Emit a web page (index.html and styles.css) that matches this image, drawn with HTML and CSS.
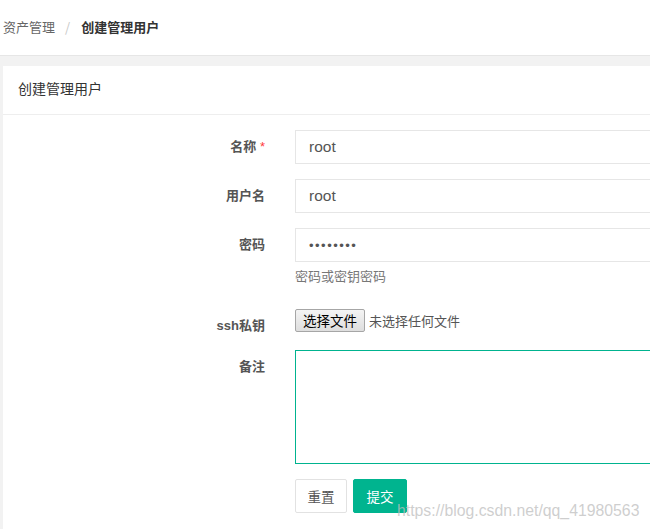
FILE: index.html
```html
<!DOCTYPE html>
<html lang="zh">
<head>
<meta charset="utf-8">
<title>创建管理用户</title>
<link rel="stylesheet" href="styles.css">
</head>
<body>
<div class="crumb">
  <span class="crumb-link">资产管理</span><span class="crumb-sep">/</span><span class="crumb-cur">创建管理用户</span>
</div>
<div class="main">
  <div class="card">
    <div class="card-header">创建管理用户</div>
    <form class="form">
      <div class="row">
        <label class="label">名称 <span class="req">*</span></label>
        <div class="field"><input class="input" type="text" value="root"></div>
      </div>
      <div class="row">
        <label class="label">用户名</label>
        <div class="field"><input class="input" type="text" value="root"></div>
      </div>
      <div class="row row-pass">
        <label class="label">密码</label>
        <div class="field">
          <input class="input" type="password" value="12345678">
          <div class="hint">密码或密钥密码</div>
        </div>
      </div>
      <div class="row row-file">
        <label class="label">ssh私钥</label>
        <div class="field file">
          <span class="file-btn">选择文件</span><span class="file-none">未选择任何文件</span>
        </div>
      </div>
      <div class="row">
        <label class="label">备注</label>
        <div class="field"><textarea class="textarea"></textarea></div>
      </div>
      <div class="row row-btns">
        <div class="label"></div>
        <div class="field btns">
          <button type="button" class="btn btn-plain">重置</button>
          <button type="button" class="btn btn-primary">提交</button>
        </div>
      </div>
    </form>
  </div>
</div>
<div class="watermark">https://blog.csdn.net/qq_41980563</div>
</body>
</html>
```
FILE: styles.css
```css
html, body {
  margin: 0;
  padding: 0;
  overflow: hidden;
  background: #fff;
  font-family: "Liberation Sans", "Noto Sans CJK SC", sans-serif;
  color: #333;
}
.crumb {
  height: 55px;
  line-height: 53px;
  padding-left: 3px;
  border-bottom: 1px solid #e6e6e6;
  font-size: 13px;
  font-family: "Noto Sans CJK SC", sans-serif;
}
.crumb-link { color: #666; }
.crumb-sep { color: #c8c8c8; margin: 0 11px 0 10px; }
.crumb-cur { color: #333; font-weight: bold; }
.main {
  background: #f2f2f2;
  padding: 10px 0 0 3px;
  height: 600px;
}
.card {
  background: #fff;
  width: 900px;
  height: 600px;
}
.card-header {
  height: 48px;
  line-height: 45px;
  padding-left: 15px;
  border-bottom: 1px solid #eeeeee;
  font-size: 14px;
  color: #333;
  font-family: "Noto Sans CJK SC", sans-serif;
}
.form {
  padding-top: 15px;
}
.row {
  display: grid;
  grid-template-columns: 262px 500px;
  column-gap: 30px;
  margin-bottom: 15px;
}
.label {
  text-align: right;
  font-size: 13px;
  font-weight: bold;
  color: #555;
  line-height: 20px;
  padding: 7px 0;
  font-family: "Liberation Sans", "Noto Sans CJK SC", sans-serif;
}
.req { color: #ff3b3b; font-weight: normal; }
.input {
  display: block;
  box-sizing: border-box;
  width: 100%;
  height: 34px;
  border: 1px solid #e6e6e6;
  padding: 0 13px;
  font-size: 15.5px;
  color: #555;
  font-family: "Liberation Sans", sans-serif;
  outline: none;
}
.input[type="password"] { font-size: 13px; letter-spacing: 1.5px; }
.hint {
  margin-top: 4px;
  font-size: 13px;
  line-height: 20px;
  color: #777;
  font-family: "Noto Sans CJK SC", sans-serif;
}
.row-pass { margin-bottom: 22px; }
.row-file { margin-bottom: 14px; }
.row-file .label { padding: 8px 0 0; }
.file {
  display: flex;
  align-items: flex-start;
  padding-top: 1px;
}
.file-btn {
  box-sizing: border-box;
  height: 23px;
  line-height: 20px;
  padding: 0 7px;
  border: 1px solid #a6a6a6;
  border-radius: 2px;
  background: linear-gradient(#f4f4f4, #dedede);
  color: #000;
  font-size: 13.5px;
  font-family: "Noto Sans CJK SC", sans-serif;
}
.file-none {
  margin-left: 4px;
  line-height: 23px;
  font-size: 13px;
  color: #555;
  font-family: "Noto Sans CJK SC", sans-serif;
}
.textarea {
  display: block;
  box-sizing: border-box;
  width: 100%;
  height: 114px;
  border: 1px solid #00b38f;
  resize: none;
  outline: none;
  margin: 0;
}
.btns {
  display: flex;
  gap: 6px;
}
.btn {
  box-sizing: border-box;
  height: 34px;
  padding: 0;
  font-size: 13.5px;
  font-family: "Noto Sans CJK SC", sans-serif;
  border-radius: 2px;
  cursor: pointer;
}
.btn-plain {
  width: 52px;
  background: #fff;
  border: 1px solid #e2e2e2;
  color: #555;
}
.btn-primary {
  width: 54px;
  background: #00b48f;
  border: 1px solid #00b48f;
  color: #fff;
}
.watermark {
  position: absolute;
  left: 397px;
  top: 502px;
  font-size: 15.8px;
  color: rgba(190, 190, 190, 0.75);
  font-family: "Liberation Sans", sans-serif;
  pointer-events: none;
}
```
